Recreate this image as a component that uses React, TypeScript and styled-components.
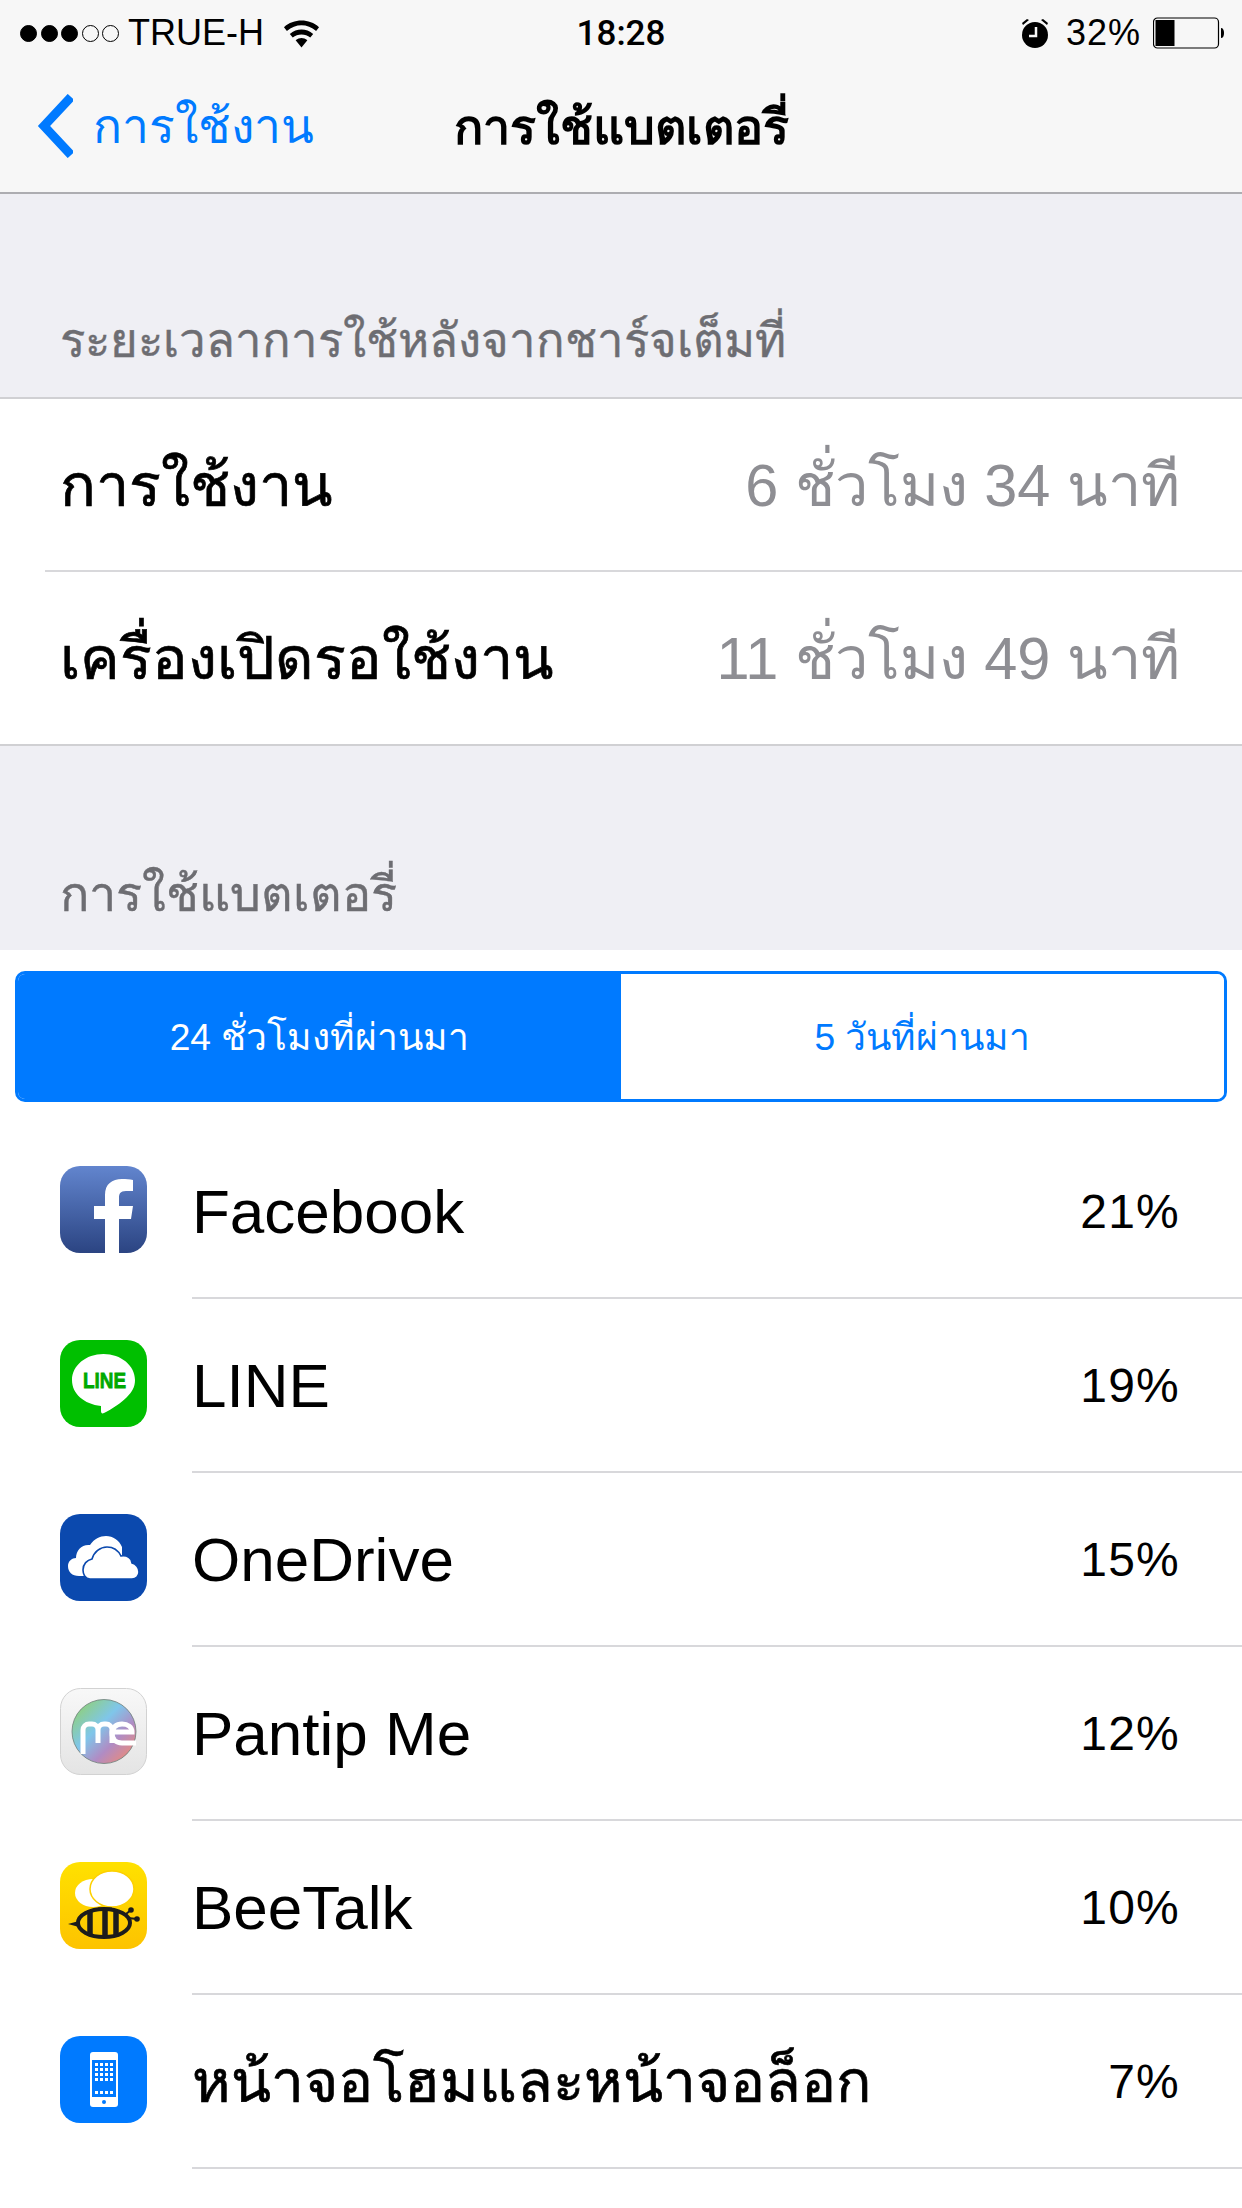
import * as React from "react";
import styled, { createGlobalStyle } from "styled-components";

const GlobalStyle = createGlobalStyle`
  html, body {
    margin: 0;
    padding: 0;
    background: #ffffff;
  }
  body {
    font-family: "Liberation Sans", "Noto Sans", sans-serif;
    overflow: hidden;
  }
`;

const Page = styled.div`
  width: 1242px;
  height: 2208px;
  overflow: hidden;
  background: #fff;
  display: flex;
  flex-direction: column;
`;

const TopBar = styled.header`
  height: 194px;
  flex: none;
  box-sizing: border-box;
  background: #f7f7f7;
  border-bottom: 2px solid #adadb1;
  display: flex;
  flex-direction: column;
`;

const StatusBar = styled.div`
  height: 60px;
  box-sizing: border-box;
  padding: 6px 17px 0;
  display: grid;
  grid-template-columns: 1fr auto 1fr;
  align-items: center;
  color: #000;
  font-size: 36px;
  font-weight: 300;
`;

const StatusLeft = styled.div`
  display: flex;
  align-items: center;
`;

const StatusRight = styled.div`
  display: flex;
  align-items: center;
  justify-content: flex-end;
`;

const Signal = styled.div`
  display: flex;
  gap: 3.5px;
  margin: 0 9px 0 3px;
`;

const SignalDot = styled.span<{ $on: boolean }>`
  width: 17px;
  height: 17px;
  box-sizing: border-box;
  border-radius: 50%;
  border: 1px solid #000;
  background: ${(p) => (p.$on ? "#000" : "transparent")};
`;

const Clock = styled.span`
  font-family: Roboto, "Liberation Sans", sans-serif;
  font-size: 35px;
  font-weight: 500;
`;

const Percent = styled.span`
  letter-spacing: 1px;
  margin: 0 12px 0 16px;
`;

const NavBar = styled.nav`
  flex: 1;
  position: relative;
  display: flex;
  align-items: center;
  justify-content: center;
`;

const BackLink = styled.div`
  position: absolute;
  left: 33px;
  top: 34px;
  display: flex;
  align-items: flex-start;
  gap: 20px;
  color: #007aff;
  font-size: 48px;
`;

const BackText = styled.span`
  line-height: 64px;
  margin-top: 1px;
`;

const NavTitle = styled.div`
  font-size: 48.5px;
  font-weight: 700;
  color: #000;
`;

const SectionHead = styled.div<{ $height: number; $size: number }>`
  height: ${(p) => p.$height}px;
  flex: none;
  box-sizing: border-box;
  background: #efeff4;
  padding: 0 60px 25px;
  display: flex;
  align-items: flex-end;
  color: #6d6d72;
  font-size: ${(p) => p.$size}px;
  line-height: 62px;
  -webkit-text-stroke: 0.4px #6d6d72;
`;

const InfoGroup = styled.section`
  flex: none;
  border-top: 2px solid #d0d0d3;
  border-bottom: 2px solid #d0d0d3;
`;

const InfoRow = styled.div<{ $divider?: boolean }>`
  height: ${(p) => (p.$divider ? 171 : 172)}px;
  margin-left: 45px;
  padding: 0 62px 0 15px;
  display: flex;
  align-items: center;
  justify-content: space-between;
  border-bottom: ${(p) => (p.$divider ? "2px solid #d8d8db" : "none")};
`;

const InfoLabel = styled.span`
  font-size: 59.3px;
  color: #000;
  -webkit-text-stroke: 0.7px #000;
`;

const InfoValue = styled.span`
  font-size: 59.5px;
  font-weight: 300;
  color: #8e8e93;
`;

const Segments = styled.div`
  flex: none;
  margin: 21px 15px 23px;
  height: 131px;
  box-sizing: border-box;
  border: 3px solid #007aff;
  border-radius: 10px;
  overflow: hidden;
  display: flex;
`;

const Segment = styled.div<{ $active: boolean }>`
  flex: 1;
  display: flex;
  align-items: center;
  justify-content: center;
  font-size: 37.2px;
  background: ${(p) => (p.$active ? "#007aff" : "#fff")};
  color: ${(p) => (p.$active ? "#fff" : "#007aff")};
`;

const AppRow = styled.div`
  height: 174px;
  flex: none;
  box-sizing: border-box;
  padding-left: 60px;
  display: flex;
  align-items: center;
`;

const AppIcon = styled.div`
  width: 87px;
  height: 87px;
  flex: none;
  margin-bottom: 5px;
`;

const AppBody = styled.div`
  flex: 1;
  height: 100%;
  margin-left: 45px;
  padding-right: 62px;
  box-sizing: border-box;
  border-bottom: 2px solid #d8d8db;
  display: flex;
  align-items: center;
  justify-content: space-between;
`;

const AppName = styled.span<{ $thai?: boolean }>`
  font-size: ${(p) => (p.$thai ? 58.6 : 62)}px;
  font-weight: 300;
  color: #000;
  -webkit-text-stroke: ${(p) => (p.$thai ? "0.7px #000" : "0")};
`;

const AppPercent = styled.span`
  font-size: 48px;
  font-weight: 300;
  letter-spacing: 1.2px;
  color: #000;
`;

const Wifi = () => (
  <svg width="37" height="30" viewBox="0 0 38 30" style={{ marginLeft: 19 }}>
    <path d="M1 9C11 0 27 0 37 9l-3 4C25 5 13 5 4 13z" />
    <path d="M7 16c7-6 17-6 24 0l-3 3.5c-5-4-13-4-18 0z" />
    <path d="M13 22.5c4-3 8-3 12 0L19 30z" />
  </svg>
);

const Alarm = () => (
  <svg width="30" height="32" viewBox="0 0 30 32">
    <circle cx="15" cy="18" r="13" />
    <path d="M2 6l5-4 2 1-6 5zM28 6l-5-4-2 1 6 5z" />
    <path d="M16 10v9H9" fill="none" stroke="#f7f7f7" strokeWidth="2.5" />
  </svg>
);

const Battery = () => (
  <svg width="72" height="32" viewBox="0 0 72 32">
    <rect x="0.5" y="1" width="65" height="30" rx="4" fill="none" stroke="#000" strokeWidth="1.2" />
    <rect x="2.5" y="3" width="19" height="26" />
    <path d="M68 11c2 0 3 2 3 5s-1 5-3 5z" />
  </svg>
);

const Chevron = () => (
  <svg width="40" height="64" viewBox="0 0 40 64">
    <path d="M38 3L11 32l27 29" fill="none" stroke="#007aff" strokeWidth="9" />
  </svg>
);

const FacebookIcon = () => (
  <svg viewBox="0 0 87 87" width="87" height="87">
    <defs>
      <linearGradient id="fb" x1="0" y1="0" x2="0" y2="1">
        <stop offset="0" stopColor="#6285ce" />
        <stop offset="1" stopColor="#2b4482" />
      </linearGradient>
      <clipPath id="fbClip">
        <rect width="87" height="87" rx="20" />
      </clipPath>
    </defs>
    <g clipPath="url(#fbClip)">
      <rect width="87" height="87" fill="url(#fb)" />
      <path
        d="M45 87V53H34V40h11V29C45 18 52 13 62 13c4 0 8 0 11 1v11h-7c-6 0-7 3-7 7v8h14l-2 13H59v34z"
        fill="#fff"
      />
    </g>
  </svg>
);

const LineIcon = () => (
  <svg viewBox="0 0 87 87" width="87" height="87">
    <rect width="87" height="87" rx="20" fill="#00bf00" />
    <path
      d="M43.5 14C61 14 75 25.500 75 40c0 7-3 12-8 17-6 6-15 12-23 16-2 1-3 0-3-2l0-5C24 64 12 54 12 40 12 25.500 26 14 43.500 14z"
      fill="#fff"
    />
    <text
      x="23"
      y="48"
      fontFamily="Liberation Sans, sans-serif"
      fontSize="22"
      fontWeight="700"
      fill="#00a900"
      stroke="#00a900"
      strokeWidth="0.8"
      textLength="43"
      lengthAdjust="spacingAndGlyphs"
    >
      LINE
    </text>
  </svg>
);

const OneDriveIcon = () => (
  <svg viewBox="0 0 87 87" width="87" height="87">
    <rect width="87" height="87" rx="20" fill="#0b49ae" />
    <path
      d="M29 62H19C12 62 8 58 8 52c0-5 4-8 8-8 0-8 6-14 14-13 4-6 10-9 16-9 7 0 13 4 16 11v20z"
      fill="#fff"
    />
    <path
      d="M30 65c-5 0-7-5-7-9 0-6 4-10 9-11 2-7 8-12 15-12 6 0 11 3 14 9 6-1 11 2 11 7 4 1 7 5 7 9s-3 7-7 7z"
      fill="#fff"
      stroke="#0b49ae"
      strokeWidth="1.6"
    />
  </svg>
);

const PantipIcon = () => (
  <svg viewBox="0 0 87 87" width="87" height="87">
    <defs>
      <linearGradient id="pbg" x1="0" y1="0" x2="0" y2="1">
        <stop offset="0" stopColor="#f8f8f8" />
        <stop offset="1" stopColor="#e4e4e4" />
      </linearGradient>
      <linearGradient id="pme" x1="0.1" y1="0.1" x2="0.9" y2="0.9">
        <stop offset="0" stopColor="#8fd07c" />
        <stop offset="0.4" stopColor="#7fc6ea" />
        <stop offset="0.7" stopColor="#b08cc4" />
        <stop offset="1" stopColor="#e98a7c" />
      </linearGradient>
    </defs>
    <rect x="0.5" y="0.5" width="86" height="86" rx="20" fill="url(#pbg)" stroke="#d2d2d2" />
    <circle cx="44" cy="43.500" r="32" fill="url(#pme)" stroke="#6d7d7a" strokeWidth="0.8" />
    <path
      d="M23 66V42a6 6 0 0 1 6-6h3a6 6 0 0 1 6 6v13M38 42a6 6 0 0 1 6-6h2a6 6 0 0 1 6 6v13"
      fill="none"
      stroke="#fff"
      strokeWidth="5"
    />
    <path
      d="M53 44H72C72 39 68 36 62 36 56 36 52 40 52 45 52 51 56 55 62 55H76"
      fill="none"
      stroke="#fff"
      strokeWidth="5"
    />
  </svg>
);

const BeeTalkIcon = () => (
  <svg viewBox="0 0 87 87" width="87" height="87">
    <defs>
      <linearGradient id="bee" x1="0" y1="0" x2="0" y2="1">
        <stop offset="0" stopColor="#ffe100" />
        <stop offset="1" stopColor="#fdc300" />
      </linearGradient>
    </defs>
    <rect width="87" height="87" rx="20" fill="url(#bee)" />
    <ellipse cx="33" cy="31" rx="18" ry="14" fill="#fff" />
    <ellipse cx="52" cy="27" rx="22" ry="18" fill="#fff" stroke="#fdd000" strokeWidth="1.5" />
    <path d="M8 62l11-3v6z" fill="#1c1c1c" />
    <ellipse cx="44" cy="61" rx="26" ry="14" fill="none" stroke="#1c1c1c" strokeWidth="4" />
    <path d="M30 48v26M45 47v28M56 48v26" stroke="#1c1c1c" strokeWidth="5.500" />
    <path d="M38 47h14" stroke="#1c1c1c" strokeWidth="3" />
    <path d="M66 52l5-4M68 56l9 1" stroke="#1c1c1c" strokeWidth="2" />
    <circle cx="71" cy="48" r="2.800" fill="#1c1c1c" />
    <circle cx="77" cy="57" r="2.800" fill="#1c1c1c" />
  </svg>
);

const HomeIcon = () => (
  <svg viewBox="0 0 87 87" width="87" height="87">
    <rect width="87" height="87" rx="20" fill="#007aff" />
    <rect x="30" y="16" width="28" height="55" rx="3" fill="#fff" />
    <rect x="32" y="24" width="24" height="37" fill="#007aff" />
    <circle cx="44" cy="66" r="2" fill="#007aff" />
    {[0, 1, 2, 3, 4].map((r) =>
      [0, 1, 2, 3].map((c) => (
        <rect key={`${r}-${c}`} x={35 + c * 5} y={r === 4 ? 55 : 27 + r * 5} width="3" height="3" fill="#fff" />
      ))
    )}
  </svg>
);

const apps = [
  { name: "Facebook", percent: "21%", icon: <FacebookIcon /> },
  { name: "LINE", percent: "19%", icon: <LineIcon /> },
  { name: "OneDrive", percent: "15%", icon: <OneDriveIcon /> },
  { name: "Pantip Me", percent: "12%", icon: <PantipIcon /> },
  { name: "BeeTalk", percent: "10%", icon: <BeeTalkIcon /> },
  { name: "หน้าจอโฮมและหน้าจอล็อก", percent: "7%", icon: <HomeIcon />, thai: true },
];

export default function App() {
  return (
    <Page>
      <GlobalStyle />
      <TopBar>
        <StatusBar>
          <StatusLeft>
            <Signal>
              {[true, true, true, false, false].map((on, i) => (
                <SignalDot key={i} $on={on} />
              ))}
            </Signal>
            <span>TRUE-H</span>
            <Wifi />
          </StatusLeft>
          <Clock>18:28</Clock>
          <StatusRight>
            <Alarm />
            <Percent>32%</Percent>
            <Battery />
          </StatusRight>
        </StatusBar>
        <NavBar>
          <BackLink>
            <Chevron />
            <BackText>การใช้งาน</BackText>
          </BackLink>
          <NavTitle>การใช้แบตเตอรี่</NavTitle>
        </NavBar>
      </TopBar>

      <SectionHead $height={203} $size={47.3}>ระยะเวลาการใช้หลังจากชาร์จเต็มที่</SectionHead>
      <InfoGroup>
        <InfoRow $divider>
          <InfoLabel>การใช้งาน</InfoLabel>
          <InfoValue>6 ชั่วโมง 34 นาที</InfoValue>
        </InfoRow>
        <InfoRow>
          <InfoLabel>เครื่องเปิดรอใช้งาน</InfoLabel>
          <InfoValue>11 ชั่วโมง 49 นาที</InfoValue>
        </InfoRow>
      </InfoGroup>
      <SectionHead $height={204} $size={48.6}>การใช้แบตเตอรี่</SectionHead>

      <Segments>
        <Segment $active>24 ชั่วโมงที่ผ่านมา</Segment>
        <Segment $active={false}>5 วันที่ผ่านมา</Segment>
      </Segments>

      {apps.map((app) => (
        <AppRow key={app.name}>
          <AppIcon>{app.icon}</AppIcon>
          <AppBody>
            <AppName $thai={app.thai}>{app.name}</AppName>
            <AppPercent>{app.percent}</AppPercent>
          </AppBody>
        </AppRow>
      ))}
    </Page>
  );
}
